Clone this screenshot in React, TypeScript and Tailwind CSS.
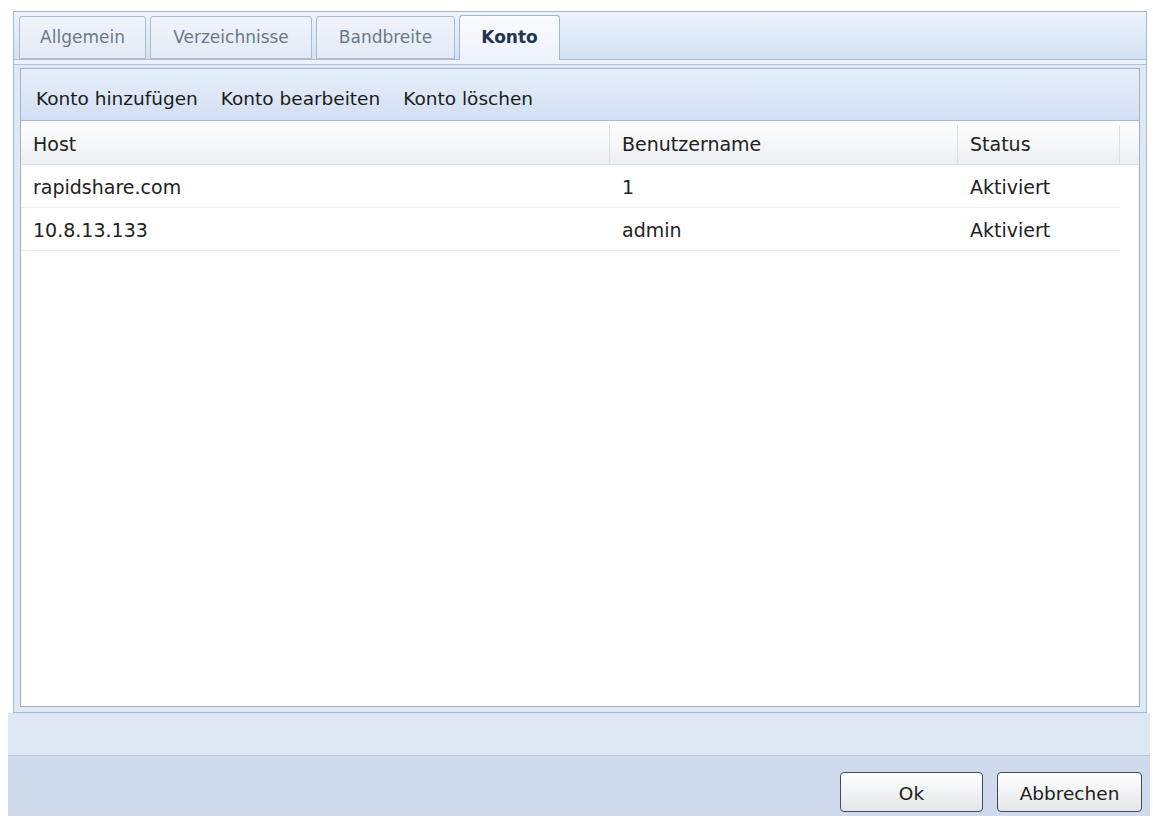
import React from 'react';

type Account = { host: string; user: string; status: string };

const accounts: Account[] = [
    { host: 'rapidshare.com', user: '1', status: 'Aktiviert' },
    { host: '10.8.13.133', user: 'admin', status: 'Aktiviert' },
];

const tabs = [
    { label: 'Allgemein', width: 'w-[127px]', active: false },
    { label: 'Verzeichnisse', width: 'w-[162px]', active: false },
    { label: 'Bandbreite', width: 'w-[139px]', active: false },
    { label: 'Konto', width: 'w-[101px]', active: true },
];

const App: React.FC = () => {
    return (
        <div className="w-[1153px] h-[823px] bg-white pt-[11px] font-['DejaVu_Sans',sans-serif] text-[#1c1c1c] overflow-hidden">
            <div className="ml-[8px] w-[1142px] flex flex-col">
                {/* settings panel */}
                <div className="bg-white pl-[5px] pr-[3px]">
                    <div className="w-[1134px] h-[702px] border border-[#a3b7cf] bg-[#dfe8f5] flex flex-col">
                        {/* tab strip */}
                        <div className="h-[48px] shrink-0 flex items-end gap-[4px] pl-[5px] bg-gradient-to-b from-[#edf3fb] to-[#d4e1f4] border-b border-[#a9bcd3]">
                            {tabs.map(t => (
                                <div
                                    key={t.label}
                                    className={
                                        t.active
                                            ? `${t.width} h-[45px] -mb-px flex items-center justify-center rounded-t-[3px] border border-b-0 border-[#a3b6cd] bg-gradient-to-b from-[#f9fbfe] to-[#eef3fa] text-[17px] font-bold text-[#1f3550]`
                                            : `${t.width} h-[43px] flex items-center justify-center rounded-t-[3px] border border-[#aabbd0] bg-gradient-to-b from-[#f1f5fb] to-[#e2eaf6] text-[17px] text-[#6a7889]`
                                    }
                                >
                                    {t.label}
                                </div>
                            ))}
                        </div>
                        <div className="h-[5px] shrink-0 bg-[#edf2fa] border-b border-[#b3c4da]" />
                        <div className="flex-1 px-[6px] pt-[3px] pb-[5px]">
                            <div className="h-full border border-[#9fb3cb] bg-white flex flex-col">
                                {/* toolbar */}
                                <div className="h-[52px] shrink-0 flex items-center gap-[23px] pl-[15px] pt-[9px] bg-gradient-to-b from-[#e7effa] to-[#d2dff3] border-b border-[#a9bbd0] text-[18.5px]">
                                    <span>Konto hinzufügen</span>
                                    <span>Konto bearbeiten</span>
                                    <span>Konto löschen</span>
                                </div>
                                {/* header */}
                                <div className="h-[44px] shrink-0 flex pt-[4px] text-[19px] text-[#222] bg-gradient-to-b from-[#ffffff] to-[#eceff3] border-b border-[#d6dbe1]">
                                    <div className="w-[589px] pl-[12px] flex items-center border-r border-[#dadfe5]">Host</div>
                                    <div className="w-[348px] pl-[12px] flex items-center border-r border-[#dadfe5]">Benutzername</div>
                                    <div className="w-[162px] pl-[12px] flex items-center border-r border-[#dadfe5]">Status</div>
                                    <div className="flex-1" />
                                </div>
                                {/* rows */}
                                <div className="flex-1">
                                    {accounts.map(a => (
                                        <div key={a.host} className="w-[1099px] h-[43px] flex pt-[3px] text-[19px] text-[#222] border-b border-[#eceef1]">
                                            <div className="w-[589px] pl-[12px] flex items-center">{a.host}</div>
                                            <div className="w-[348px] pl-[12px] flex items-center">{a.user}</div>
                                            <div className="w-[162px] pl-[12px] flex items-center">{a.status}</div>
                                        </div>
                                    ))}
                                </div>
                            </div>
                        </div>
                    </div>
                </div>
                <div className="h-[42px] bg-[#dee8f5]" />
                {/* dialog buttons */}
                <div className="h-[61px] border-t border-[#b4c5dd] bg-[#cfdbed] flex justify-end gap-[14px] pr-[8px] pt-[16px]">
                    <button className="w-[143px] h-[40px] pt-[3px] rounded-[4px] border border-[#3f4d5c] bg-gradient-to-b from-[#ffffff] to-[#e3e5e8] text-[18.5px] text-[#1c1c1c]">
                        Ok
                    </button>
                    <button className="w-[145px] h-[40px] pt-[3px] rounded-[4px] border border-[#3f4d5c] bg-gradient-to-b from-[#ffffff] to-[#e3e5e8] text-[18.5px] text-[#1c1c1c]">
                        Abbrechen
                    </button>
                </div>
            </div>
        </div>
    );
};

export default App;
